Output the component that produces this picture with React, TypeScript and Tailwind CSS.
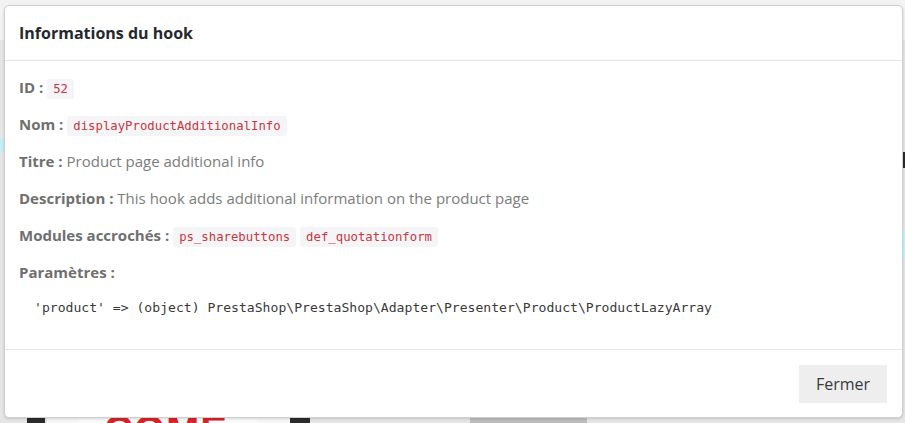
const ROWS: ReadonlyArray<{ label: string; text?: string; codes?: string[] }> = [
  { label: "ID :", codes: ["52"] },
  { label: "Nom :", codes: ["displayProductAdditionalInfo"] },
  { label: "Titre :", text: "Product page additional info" },
  { label: "Description :", text: "This hook adds additional information on the product page" },
  { label: "Modules accrochés :", codes: ["ps_sharebuttons", "def_quotationform"] },
];

function Code({ children }: { children: string }) {
  return (
    <code className="rounded-[3px] bg-[#f5f5f7] px-[6px] py-[3px] font-['DejaVu_Sans_Mono',monospace] text-[12.3px] leading-none text-[#c93540]">
      {children}
    </code>
  );
}

export default function App() {
  return (
    <div className="relative h-[423px] w-[905px] overflow-hidden bg-[#e6e6e6] font-['Open_Sans',sans-serif]">
      {/* page behind the dialog, mostly hidden */}
      <div className="absolute left-0 top-0 h-[40px] w-full bg-[#f3f3f3]" />
      <div className="absolute left-0 top-[138px] h-[14px] w-[4px] bg-[#c8eef5]" />
      <div className="absolute right-0 top-[152px] h-[16px] w-[3px] bg-[#2a2a2a]" />
      <div className="absolute right-0 top-[230px] h-[30px] w-[3px] bg-[#c8f2f8]" />
      <div className="absolute bottom-0 left-[27px] h-[6px] w-[18px] bg-[#2b2b2b]" />
      <div className="absolute bottom-0 left-[47px] h-[6px] w-[31px] bg-[#f7f7f7]" />
      <div className="absolute bottom-0 left-[78px] h-[6px] w-[180px] bg-[#fbfbfb]" />
      <div className="absolute left-[104px] top-[410px] font-['Liberation_Sans',sans-serif] text-[40px] font-bold leading-none tracking-[1px] text-[#d8232a]">
        COME
      </div>
      <div className="absolute bottom-0 left-[258px] h-[6px] w-[32px] bg-[#f7f7f7]" />
      <div className="absolute bottom-0 left-[290px] h-[6px] w-[20px] bg-[#2b2b2b]" />
      <div className="absolute bottom-0 left-[470px] h-[6px] w-[117px] bg-[#bdbdbd]" />

      {/* dialog */}
      <div className="absolute left-[4px] top-[5px] flex w-[899px] flex-col rounded-[5px] border border-[#cfcfcf] bg-white shadow-[0_1px_3px_rgba(0,0,0,0.15)]">
        <div className="border-b border-[#e5e5e5] px-[14px] py-[15px]">
          <h5 className="text-[16px] font-bold leading-[24px] text-[#25282c]">Informations du hook</h5>
        </div>

        <div className="px-[14px] pt-[16px] pb-[16px] text-[15px] leading-[21px] text-[#7c7c7c]">
          {ROWS.map((row) => (
            <p key={row.label} className="mb-[16px]">
              <span className="font-bold text-[#6f6f6f]">{row.label}</span>{" "}
              {row.text}
              {row.codes?.map((c, i) => (
                <span key={c}>
                  {i > 0 && " "}
                  <Code>{c}</Code>
                </span>
              ))}
            </p>
          ))}
          <p className="mb-[16px] font-bold text-[#6f6f6f]">Paramètres :</p>
          <pre className="mb-[16px] pl-[15px] font-['DejaVu_Sans_Mono',monospace] text-[13.1px] leading-[18px] text-[#3a3a3a]">
            {"'product' => (object) PrestaShop\\PrestaShop\\Adapter\\Presenter\\Product\\ProductLazyArray"}
          </pre>
        </div>

        <div className="flex justify-end border-t border-[#e5e5e5] px-[15px] pt-[15px] pb-[14px]">
          <button className="h-[38px] w-[88px] bg-[#eeeeee] text-[16px] text-[#363a41]">Fermer</button>
        </div>
      </div>
    </div>
  );
}
